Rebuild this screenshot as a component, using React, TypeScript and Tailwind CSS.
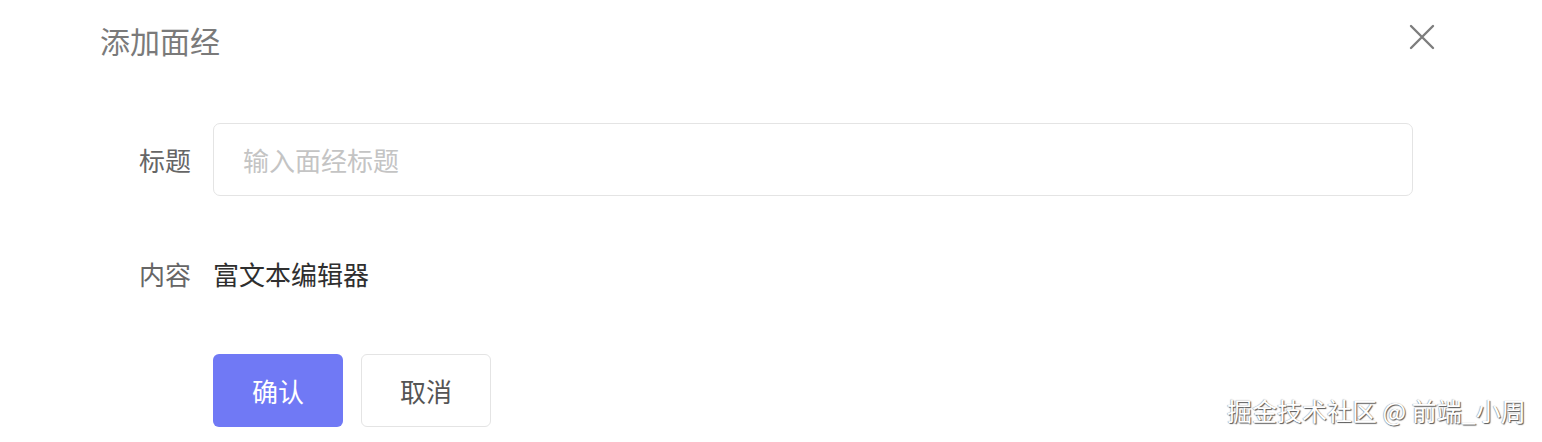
import React from "react";

const font = { fontFamily: '"Noto Sans CJK SC", "Noto Sans", sans-serif' };

export default function App() {
  return (
    <div className="relative w-[1542px] h-[442px] bg-white overflow-hidden" style={font}>
      <div className="flex items-center justify-between pl-[100px] pr-[106px] pt-[20px] h-[60px]">
        <div className="text-[30px] leading-[38px] text-[#7a7a7a]">添加面经</div>
        <svg width="28" height="28" viewBox="0 0 28 28" className="-mt-[6px]">
          <path d="M3 3 L25 25 M25 3 L3 25" stroke="#7d7d7d" strokeWidth="2.4" strokeLinecap="round" />
        </svg>
      </div>

      <div className="flex flex-col pt-[63px]">
        <div className="flex items-center h-[73px]">
          <div className="w-[191px] text-right text-[26px] text-[#666]">标题</div>
          <div className="ml-[22px] w-[1200px] h-[73px] border-[1.5px] border-[#e4e4e4] rounded-[7px] flex items-center pl-[29px] text-[26px] text-[#c4c4c4]">
            输入面经标题
          </div>
        </div>

        <div className="flex items-center h-[40px] mt-[57px]">
          <div className="w-[191px] text-right text-[26px] text-[#666]">内容</div>
          <div className="ml-[22px] text-[26px] text-[#2f2f2f]">富文本编辑器</div>
        </div>

        <div className="flex items-center mt-[61px] ml-[213px] gap-[18px]">
          <div className="w-[130px] h-[73px] rounded-[6px] bg-[#7079f5] flex items-center justify-center text-[26px] text-white">
            确认
          </div>
          <div className="w-[130px] h-[73px] rounded-[6px] border-[1.5px] border-[#e4e4e4] bg-white flex items-center justify-center text-[26px] text-[#555]">
            取消
          </div>
        </div>
      </div>

      <div
        className="absolute left-[1227px] top-[393px] text-[25px] leading-[34px] text-white whitespace-nowrap"
        style={{ ...font, textShadow: "1px 1px 1px #555, -0.5px -0.5px 1px #999" }}
      >
        掘金技术社区 @ 前端_小周
      </div>
    </div>
  );
}
